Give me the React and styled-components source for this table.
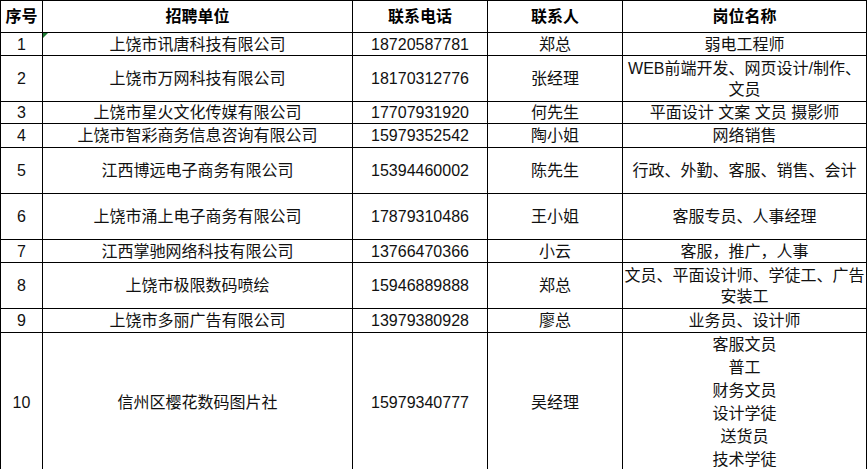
import React from "react";
import styled, { createGlobalStyle, css } from "styled-components";

const Global = createGlobalStyle`
  html, body { margin: 0; padding: 0; background: #fff; }
  body { font-family: "Liberation Sans", "Noto Sans CJK SC", sans-serif; }
`;

const Table = styled.div`
  width: 867px;
  box-sizing: border-box;
  padding: 1px;
  background: #000;
  display: flex;
  flex-direction: column;
  gap: 1px;
`;

const Row = styled.div`
  display: grid;
  grid-template-columns: 41px 309px 134px 134px 243px;
  gap: 1px;
  height: ${(p) => p.$h}px;
`;

const Cell = styled.div`
  position: relative;
  background: #fff;
  display: flex;
  align-items: center;
  justify-content: center;
  text-align: center;
  white-space: nowrap;
  font-family: "Liberation Sans", "Noto Sans CJK SC", sans-serif;
  font-size: 16px;
  color: #111;
  line-height: ${(p) => p.$lh || 21}px;
  ${(p) =>
    p.$head &&
    css`
      font-weight: 700;
      color: #000;
    `}
  ${(p) =>
    p.$flag &&
    css`
      &::before {
        content: "";
        position: absolute;
        left: 0;
        top: 0;
        width: 0;
        height: 0;
        border-top: 5px solid #1e7b34;
        border-right: 5px solid transparent;
      }
    `}
`;

const Lines = styled.div`
  display: flex;
  flex-direction: column;
  align-items: center;
`;

const headers = ["序号", "招聘单位", "联系电话", "联系人", "岗位名称"];

const rows = [
  { h: 22, no: "1", co: "上饶市讯唐科技有限公司", tel: "18720587781", who: "郑总", jobs: ["弱电工程师"], flag: true },
  { h: 45, no: "2", co: "上饶市万网科技有限公司", tel: "18170312776", who: "张经理", jobs: ["WEB前端开发、网页设计/制作、", "文员"] },
  { h: 21, no: "3", co: "上饶市星火文化传媒有限公司", tel: "17707931920", who: "何先生", jobs: ["平面设计 文案 文员 摄影师"] },
  { h: 23, no: "4", co: "上饶市智彩商务信息咨询有限公司", tel: "15979352542", who: "陶小姐", jobs: ["网络销售"] },
  { h: 45, no: "5", co: "江西博远电子商务有限公司", tel: "15394460002", who: "陈先生", jobs: ["行政、外勤、客服、销售、会计"] },
  { h: 45, no: "6", co: "上饶市涌上电子商务有限公司", tel: "17879310486", who: "王小姐", jobs: ["客服专员、人事经理"] },
  { h: 22, no: "7", co: "江西掌驰网络科技有限公司", tel: "13766470366", who: "小云", jobs: ["客服，推广，人事"] },
  { h: 45, no: "8", co: "上饶市极限数码喷绘", tel: "15946889888", who: "郑总", jobs: ["文员、平面设计师、学徒工、广告", "安装工"] },
  { h: 23, no: "9", co: "上饶市多丽广告有限公司", tel: "13979380928", who: "廖总", jobs: ["业务员、设计师"] },
  { h: 135, no: "10", co: "信州区樱花数码图片社", tel: "15979340777", who: "吴经理", jobs: ["客服文员", "普工", "财务文员", "设计学徒", "送货员", "技术学徒"], lh: 23 },
];

export default function App() {
  return (
    <>
      <Global />
      <Table>
        <Row $h={31}>
          {headers.map((t) => (
            <Cell key={t} $head>
              {t}
            </Cell>
          ))}
        </Row>
        {rows.map((r) => (
          <Row key={r.no} $h={r.h}>
            <Cell>{r.no}</Cell>
            <Cell $flag={r.flag}>{r.co}</Cell>
            <Cell>{r.tel}</Cell>
            <Cell>{r.who}</Cell>
            <Cell $lh={r.lh}>
              <Lines>
                {r.jobs.map((j) => (
                  <span key={j}>{j}</span>
                ))}
              </Lines>
            </Cell>
          </Row>
        ))}
      </Table>
    </>
  );
}
